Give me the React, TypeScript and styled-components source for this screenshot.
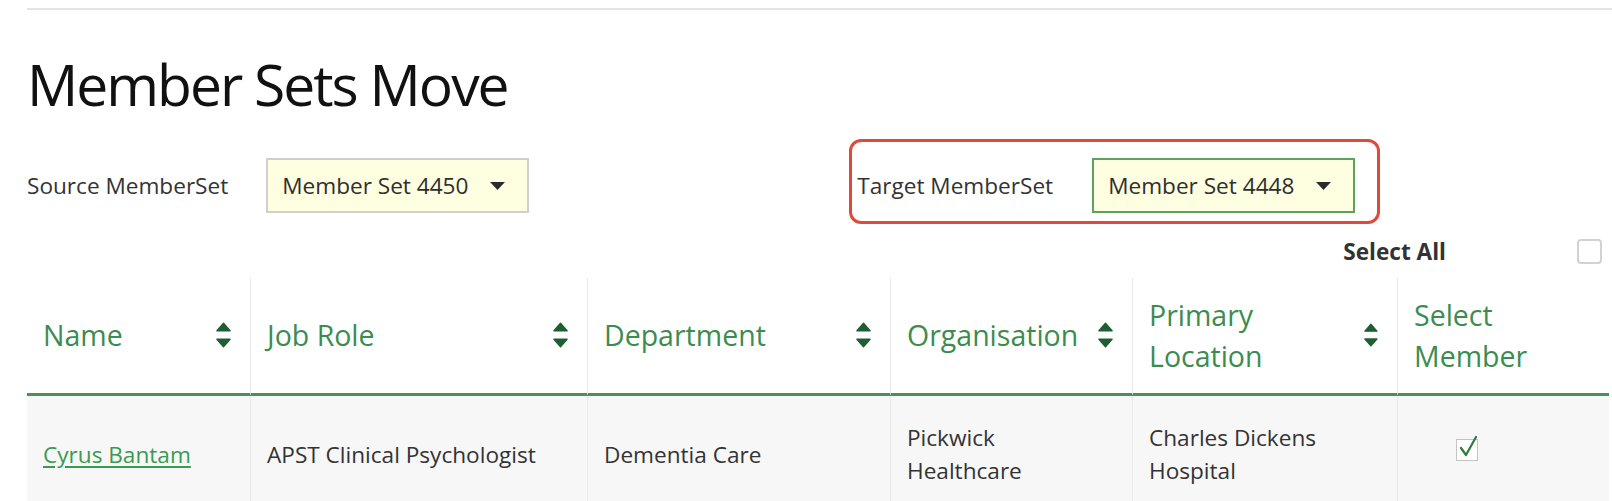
import React from 'react'
import styled, { createGlobalStyle } from 'styled-components'

const GlobalStyle = createGlobalStyle`
  body {
    margin: 0;
    background: #ffffff;
    font-family: "Open Sans", "Liberation Sans", sans-serif;
    color: #333333;
  }
`

interface Member {
  name: string
  jobRole: string
  department: string
  organisation: string
  location: string
  selected: boolean
}

const members: Member[] = [
  {
    name: 'Cyrus Bantam',
    jobRole: 'APST Clinical Psychologist',
    department: 'Dementia Care',
    organisation: 'Pickwick Healthcare',
    location: 'Charles Dickens Hospital',
    selected: true,
  },
]

const columns = [
  { label: 'Name', sortable: true },
  { label: 'Job Role', sortable: true },
  { label: 'Department', sortable: true },
  { label: 'Organisation', sortable: true },
  { label: 'Primary Location', sortable: true },
  { label: 'Select Member', sortable: false },
]

const SortIcon = () => (
  <svg width="15" height="27" viewBox="0 0 16 28">
    <path d="M8 1 L15 9 H1 Z" fill="#1f5e31" stroke="#1f5e31" strokeWidth="1.5" strokeLinejoin="round" />
    <path d="M1 18 H15 L8 26 Z" fill="#1f5e31" stroke="#1f5e31" strokeWidth="1.5" strokeLinejoin="round" />
  </svg>
)

const CaretDown = () => (
  <svg width="15" height="8" viewBox="0 0 15 8">
    <path d="M0 0 H15 L7.5 8 Z" fill="#2b2b2b" />
  </svg>
)

const App = () => {
  return (
    <Page>
      <GlobalStyle />
      <TopRule />
      <Title>Member Sets Move</Title>

      <FilterRow>
        <SourceGroup>
          <FieldLabel>Source MemberSet</FieldLabel>
          <Select>
            <span>Member Set 4450</span>
            <CaretDown />
          </Select>
        </SourceGroup>
        <Highlight>
          <FieldLabel>Target MemberSet</FieldLabel>
          <Select $active>
            <span>Member Set 4448</span>
            <CaretDown />
          </Select>
        </Highlight>
      </FilterRow>

      <SelectAllRow>
        <SelectAllLabel>Select All</SelectAllLabel>
        <SelectAllBox />
      </SelectAllRow>

      <Table>
        {columns.map((col, i) => (
          <HeadCell key={col.label} $first={i === 0}>
            <span>{col.label}</span>
            {col.sortable && <SortIcon />}
          </HeadCell>
        ))}
        {members.map((m) => (
          <React.Fragment key={m.name}>
            <Cell $first>
              <NameLink href="#">{m.name}</NameLink>
            </Cell>
            <Cell>{m.jobRole}</Cell>
            <Cell>{m.department}</Cell>
            <Cell>{m.organisation}</Cell>
            <Cell>{m.location}</Cell>
            <CheckCell>
              <RowCheck>
                {m.selected && (
                  <svg width="22" height="24" viewBox="0 0 22 24">
                    <path d="M4 13 L9 20 L19 2" fill="none" stroke="#2f7d3c" strokeWidth="2.2" strokeLinecap="round" strokeLinejoin="round" />
                  </svg>
                )}
              </RowCheck>
            </CheckCell>
          </React.Fragment>
        ))}
      </Table>
    </Page>
  )
}

export default App

const Page = styled.div`
  padding: 8px 3px 0 27px;
  overflow: hidden;
`

const TopRule = styled.div`
  height: 2px;
  margin-right: -3px;
  background: #e4e4e4;
`

const Title = styled.h1`
  margin: 40px 0 0;
  font-size: 57px;
  font-weight: 400;
  line-height: 1.2;
  letter-spacing: -2px;
  color: #111111;
`

const FilterRow = styled.div`
  display: flex;
  align-items: flex-start;
  margin-top: 21px;
`

const SourceGroup = styled.div`
  display: flex;
  align-items: center;
  gap: 38px;
  padding-top: 19px;
`

const Highlight = styled.div`
  display: flex;
  align-items: center;
  gap: 39px;
  margin-left: 320px;
  padding: 16px 22px 8px 5px;
  border: 3px solid #e04a3b;
  border-radius: 12px;
`

const FieldLabel = styled.span`
  font-size: 22.6px;
  color: #333333;
  white-space: nowrap;
`

const Select = styled.div<{ $active?: boolean }>`
  box-sizing: border-box;
  width: 263px;
  height: 55px;
  display: flex;
  align-items: center;
  justify-content: space-between;
  padding: 0 22px 0 14px;
  background: #fefee0;
  border: ${(p) => (p.$active ? '2px solid #5aa25e' : '2px solid #cfcfcf')};
  font-size: 22.6px;
  color: #2f2f2f;
`

const SelectAllRow = styled.div`
  display: flex;
  justify-content: flex-end;
  align-items: center;
  margin-top: 15px;
  padding-right: 7px;
  height: 25px;
`

const SelectAllLabel = styled.span`
  font-size: 22.6px;
  font-weight: 700;
  color: #333333;
`

const SelectAllBox = styled.div`
  box-sizing: border-box;
  width: 25px;
  height: 25px;
  margin-left: 131px;
  border: 2px solid #d2d2d2;
  border-radius: 4px;
  background: #ffffff;
`

const Table = styled.div`
  display: grid;
  grid-template-columns: 223px 337px 303px 242px 265px 212px;
  margin-top: 14px;
`

const HeadCell = styled.div<{ $first?: boolean }>`
  box-sizing: border-box;
  min-height: 118px;
  display: flex;
  align-items: center;
  justify-content: space-between;
  gap: 8px;
  padding: 0 19px 0 16px;
  border-left: ${(p) => (p.$first ? 'none' : '1px solid #e9e9e9')};
  border-bottom: 3px solid #4b8f5b;
  font-size: 28.5px;
  line-height: 41px;
  color: #3c8c50;
`

const Cell = styled.div<{ $first?: boolean }>`
  box-sizing: border-box;
  min-height: 116px;
  display: flex;
  align-items: center;
  padding: 0 26px 0 16px;
  background: #f7f7f7;
  border-left: ${(p) => (p.$first ? 'none' : '1px solid #e9e9e9')};
  font-size: 22.6px;
  line-height: 33px;
  color: #333333;
`

const CheckCell = styled(Cell)`
  padding-left: 58px;
`

const NameLink = styled.a`
  color: #3a9a52;
  text-decoration: underline;
  text-underline-offset: 3px;
`

const RowCheck = styled.div`
  position: relative;
  box-sizing: border-box;
  width: 22px;
  height: 22px;
  border: 1px solid #c4c4c4;
  background: #ffffff;
  margin-top: -8px;

  svg {
    position: absolute;
    left: 0;
    top: -5px;
  }
`
